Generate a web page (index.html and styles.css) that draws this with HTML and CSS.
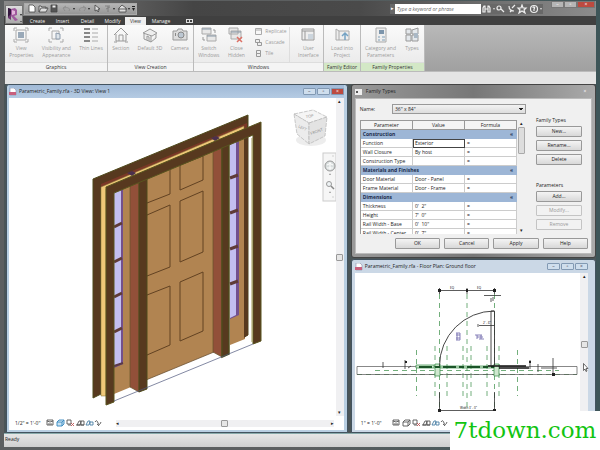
FILE: index.html
```
<!DOCTYPE html>
<html lang="en">
<head>
    <meta charset="UTF-8">
    <meta name="viewport" content="width=device-width, initial-scale=1.0">
    <title>Parametric_Family.rfa</title>
    <link rel="stylesheet" href="styles.css">
</head>
<body>
    <div class="app">
        <header class="titlebar">
            <div class="quick-access">
                <svg width="108" height="10" viewBox="0 0 108 10">
                    <g fill="none" stroke="#444" stroke-width=".8">
                        <path d="M2 1h4l2 2v5H2z" fill="#fff"/>
                        <path d="M12 8V2h2l1 1h4v2M12 8l2-4h7l-2 4z" fill="#ddd"/>
                        <path d="M24 1h6v7h-6z" fill="#555"/>
                        <path d="M25.500 1.500h3v2h-3z" fill="#eee" stroke="none"/>
                        <path d="M42 7c2-3-2-4-5-3M39 2l-3 2 2 3M53 7c-2-3 2-4 5-3M56 2l3 2-2 3" stroke="#888"/>
                        <path d="M68 1v6l2-1 1 2 1-1-1-2h2z" fill="#ddd"/>
                        <path d="M78 2h5M81 2v6M79 5l4-2" stroke="#777"/>
                        <path d="M92 4l3-3 4 3v4h-7zM91 5h9" fill="#ddd"/>
                    </g>
                    <path d="M46 4h2l-1 2zM61 4h2l-1 2zM86 4h2l-1 2zM101 4h2l-1 2zM105 2h3v1h-3zM105 4h3l-1.500 3z" fill="#222"/>
                </svg>
            </div>
            <div class="search">
                <button class="search-arrow" aria-label="Expand search">▸</button>
                <input type="text" aria-label="Search help" placeholder="Type a keyword or phrase">
                <svg width="62" height="10" viewBox="0 0 62 10">
                    <g fill="none" stroke="#eee" stroke-width="1.200">
                        <path d="M2 8V4l1-2h1v6zM7 8V2h1l1 2v4zM4 5h3"/>
                        <circle cx="18" cy="4" r="2"/><path d="M20 5l3 3"/>
                        <path d="M28 2c0 4 2 5 5 5M31 4l3-3M29 8l2-2"/>
                        <path d="M41 1l1 3h3l-2 2 1 3-3-2-3 2 1-3-2-2h3z"/>
                        <circle cx="53" cy="5" r="3.500"/><path d="M52 4c0-2 3-1 1 1v2"/>
                    </g>
                    <path d="M12 4h2l-1 2zM59 4h2l-1 2z" fill="#ddd"/>
                </svg>
            </div>
            <div class="window-buttons">
                <button aria-label="Minimize">–</button>
                <button aria-label="Maximize">▫</button>
                <button class="close" aria-label="Close">×</button>
            </div>
        </header>
        <button class="app-button" aria-label="Application menu">
            <svg width="17" height="17" viewBox="0 0 17 17">
                <path d="M2 2l3 1v11l-3-2z" fill="#6d3a72"/>
                <path d="M5 3l4-1 2 2v5l-3 1 4 4-3 1-4-5z" fill="#a05a9e"/>
                <path d="M6 4l3 1v3l-3 1z" fill="#e3b5dc"/>
                <path d="M2 2l3 1v5l-3 3z" fill="#32163d"/>
                <path d="M14 8h2l-1 2zM14 15h2l-1 1z" fill="#222"/>
            </svg>
        </button>

        <nav class="tabs">
            <a href="#">Create</a>
            <a href="#">Insert</a>
            <a href="#">Detail</a>
            <a href="#">Modify</a>
            <a href="#" class="active">View</a>
            <a href="#">Manage</a>
            <svg class="tab-toggle" width="7" height="4" viewBox="0 0 7 4"><rect x=".5" y=".5" width="6" height="3" fill="none" stroke="#ddd"/><path d="M3 1h1v2H3z" fill="#ddd"/></svg>
        </nav>

        <section class="ribbon">
            <div class="panel graphics">
                <div class="tools">
                    <button class="tool" disabled>
                        <svg width="16" height="16" viewBox="0 0 16 16"><path d="M4 1H1v3M12 1h3v3M4 15H1v-3M12 15h3v-3M3 3h10v10H3z" fill="none" stroke="#aaa"/><path d="M5 5h6v6H5z" fill="#9aa9b8"/></svg>
                        View<br>Properties
                    </button>
                    <button class="tool" disabled>
                        <svg width="16" height="16" viewBox="0 0 16 16"><path d="M4 1H1v3M12 1h3v3M4 15H1v-3M12 15h3v-3M4 4h7v8H4z" fill="none" stroke="#aaa"/><path d="M8 6l4 1v5H8z" fill="#dfe5ea" stroke="#8d9bab"/></svg>
                        Visibility and<br>Appearance
                    </button>
                    <button class="tool" disabled>
                        <svg width="16" height="16" viewBox="0 0 16 16"><path d="M1 2h6M1 6h6M1 10h6M1 14h6" stroke="#888" stroke-width="2"/><path d="M9 2h6M9 6h6M9 10h6M9 14h6" stroke="#aaa"/></svg>
                        Thin Lines
                    </button>
                </div>
                <h2>Graphics</h2>
            </div>
            <div class="panel creation">
                <div class="tools">
                    <button class="tool" disabled>
                        <svg width="16" height="16" viewBox="0 0 16 16"><path d="M1 8l7-7 7 7M3 7v7h10V7M6 14V8h4v6M1 15h3M12 15h3" fill="none" stroke="#999"/></svg>
                        Section
                    </button>
                    <button class="tool" disabled>
                        <svg width="16" height="16" viewBox="0 0 16 16"><path d="M1 6l7-4 7 4-5 3zM2 7v5l7 3V9M9 15l5-4V7M5 13V9l2 1v4" fill="#eee" stroke="#999"/></svg>
                        Default 3D
                    </button>
                    <button class="tool" disabled>
                        <svg width="16" height="16" viewBox="0 0 16 16"><path d="M1 4h4l1-2h4l1 2h4v9H1z" fill="#ddd" stroke="#999"/><circle cx="9" cy="8" r="3" fill="#bcc7d2" stroke="#888"/><path d="M3 6h1v3H3z" fill="#888"/></svg>
                        Camera
                    </button>
                </div>
                <h2>View Creation</h2>
            </div>
            <div class="panel windows">
                <div class="tools">
                    <button class="tool" disabled>
                        <svg width="16" height="16" viewBox="0 0 16 16"><path d="M1 1h9v6H1zM6 8h9v6H6z" fill="#e8e8e8" stroke="#aaa"/><path d="M1 2h9M6 9h9" stroke="#8797a6"/><path d="M12 3h2v3M4 13H2v-3" fill="none" stroke="#999"/></svg>
                        Switch<br>Windows
                    </button>
                    <button class="tool" disabled>
                        <svg width="16" height="16" viewBox="0 0 16 16"><path d="M1 1h9v6H1zM3 4h10v8H3z" fill="#e8e8e8" stroke="#aaa"/><path d="M3 5h10" stroke="#8797a6"/><path d="M9 10l5 5M14 10l-5 5" stroke="#dc7065" stroke-width="1.500"/></svg>
                        Close<br>Hidden
                    </button>
                    <div class="tool-list">
                        <button disabled><svg width="7" height="7" viewBox="0 0 7 7"><path d="M.5.5h6v6h-6zM1 2h5" fill="none" stroke="#aaa"/></svg>Replicate</button>
                        <button disabled><svg width="7" height="7" viewBox="0 0 7 7"><path d="M.5.5h4v3h-4zM2.500 3.500h4v3h-4z" fill="#eee" stroke="#999"/></svg>Cascade</button>
                        <button disabled><svg width="7" height="7" viewBox="0 0 7 7"><path d="M1.500.5h4v3h-4zM1.500 3.500h4v3h-4z" fill="none" stroke="#999"/></svg>Tile</button>
                    </div>
                    <button class="tool" disabled>
                        <svg width="16" height="16" viewBox="0 0 16 16"><path d="M2 2h12v11H2z" fill="#eee" stroke="#999"/><path d="M2 4h12M5 4v9" stroke="#999"/><path d="M8 7h5v5H8z" fill="#ccd5dd"/></svg>
                        User<br>Interface
                    </button>
                </div>
                <h2>Windows</h2>
            </div>
            <div class="panel editor family">
                <div class="tools">
                    <button class="tool" disabled>
                        <svg width="16" height="16" viewBox="0 0 16 16"><path d="M2 2l3 2v9H2zM5 4h10v9H5" fill="#eee" stroke="#aaa"/><path d="M11 13V7M8 9l3-3 3 3" fill="none" stroke="#75a3c4" stroke-width="1.500"/></svg>
                        Load into<br>Project
                    </button>
                </div>
                <h2>Family Editor</h2>
            </div>
            <div class="panel props family">
                <div class="tools">
                    <button class="tool" disabled>
                        <svg width="16" height="16" viewBox="0 0 16 16"><path d="M3 1h10v14H3z" fill="#eee" stroke="#aaa"/><path d="M6 3h5v4H6z" fill="#7d95ab"/><path d="M5 10h2M9 10h3M5 13h2M9 13h3" stroke="#80a0b8"/></svg>
                        Category and<br>Parameters
                    </button>
                    <button class="tool" disabled>
                        <svg width="16" height="16" viewBox="0 0 16 16"><path d="M2 2h5v5H2zM2 8h5v6H2zM8 3l6-2v6H8zM8 8h6v6H8z" fill="#e4e8ec" stroke="#999"/><path d="M10 6h4v5h-4z" fill="#aab8c5"/></svg>
                        Types
                    </button>
                </div>
                <h2>Family Properties</h2>
            </div>
        </section>
        <div class="options-bar"></div>

        <main class="workspace">
            <section class="doc active-doc">
                <div class="doc-title">
                    <svg width="8" height="8" viewBox="0 0 8 8"><path d="M1 0h4l2 2v5H1z" fill="#fff" stroke="#8a8fa8" stroke-width=".6"/><path d="M0 4h7v3H0z" fill="#c8607d"/></svg>
                    <h1>Parametric_Family.rfa - 3D View: View 1</h1>
                    <div class="doc-buttons">
                        <button aria-label="Minimize view">–</button>
                        <button aria-label="Restore view">▫</button>
                        <button class="close" aria-label="Close view">×</button>
                    </div>
                </div>
                <div class="doc-body">
                    <div class="canvas">
                        <svg width="329" height="320" viewBox="9 98 329 320">
                            <!-- back frame -->
                            <path d="M93 179L248 115V335L244 337V127L101 190V394L93 398z" fill="#57391f" stroke="#4f4a1c"/>
                            <path d="M101 184L247 123V133L101 196z" fill="#7b3827"/>
                            <path d="M101 187L244 126V129L106 189V396H101z" fill="#efc878" stroke="#83703a" stroke-width=".5"/>
                            <path d="M127 173l5-2 4 2-4 3zM211 138l5-2 4 2-5 3z" fill="#4b304d"/>
                            <!-- left sidelight -->
                            <path d="M114 190L131 183V387L114 394z" fill="#b18451"/>
                            <path d="M114 192L123 188V364L114 368z" fill="#72508e"/>
                            <path d="M114 192L121 189V363L114 366z" fill="#c3bff0"/>
                            <path d="M114 227l8-4M114 262l8-4M114 297l8-4M114 332l8-4" stroke="#5f3b37" stroke-width="3"/>
                            <path d="M114 366l9-3" stroke="#5b3a49" stroke-width="2"/>
                            <!-- door leaf -->
                            <path d="M146 177L214 149V352L146 380z" fill="#b18451" stroke="#5f4526" stroke-width=".7"/>
                            <g fill="none" stroke="#624222">
                                <path d="M147 178L170 169V194L147 203"/>
                                <path d="M180 165L203 156V180L180 190z"/>
                                <path d="M147 215L170 205V267L147 276"/>
                                <path d="M180 201L203 191V252L180 262z"/>
                                <path d="M147 295L170 286V345L147 355"/>
                                <path d="M180 282L203 272V331L180 341z"/>
                            </g>
                            <!-- mullion posts -->
                            <path d="M130 184L139 180V392L130 387z" fill="#925039" stroke="#64552a" stroke-width=".7"/>
                            <path d="M139 180L147 177V389L139 392z" fill="#57391f" stroke="#4f4a1c"/>
                            <path d="M213 149L222 145V357L213 352z" fill="#925039" stroke="#64552a" stroke-width=".7"/>
                            <path d="M222 146L229 143V354L222 357z" fill="#57391f" stroke="#4f4a1c" stroke-width="1.500"/>
                            <!-- right sidelight -->
                            <path d="M230 142L245 136V339L230 345z" fill="#b18451"/>
                            <path d="M230 142L239 138V315L230 319z" fill="#72508e"/>
                            <path d="M230 142L236 139V315L230 318z" fill="#c3bff0"/>
                            <path d="M230 178l8-3M230 213l8-3M230 249l8-3M230 284l8-3" stroke="#5f3b37" stroke-width="3"/>
                            <path d="M244 137V338L248 335V134z" fill="#57391f"/>
                            <!-- front frame -->
                            <path d="M106 187L261 122V341L253 344V135L114 193V402L106 405z" fill="#57391f" stroke="#59551f"/>
                            <path d="M252 138V342" stroke="#a39b57"/>
                            <path d="M114 401L253 344" stroke="#4d567b" stroke-width=".7"/>
                            <!-- view cube -->
                            <ellipse cx="311" cy="140" rx="15" ry="6" fill="#ededed"/>
                            <g stroke="#b5b5b5" stroke-width=".7" stroke-dasharray="4 1">
                                <path d="M294 114L313 110L327 117L309 123z" fill="#f5f5f5"/>
                                <path d="M294 114L309 123V144L297 134z" fill="#ececec"/>
                                <path d="M309 123L327 117L325 136L309 144z" fill="#e3e3e3"/>
                            </g>
                            <text class="cube-text" transform="translate(306 118) rotate(-7)">TOP</text>
                            <text class="cube-text" transform="translate(298 127) rotate(28)">LEFT</text>
                            <text class="cube-text" transform="translate(311 135) rotate(-20)">FRONT</text>
                            <!-- navigation bar -->
                            <rect x="323" y="153" width="13" height="48" fill="#f6f6f6" stroke="#ccc"/>
                            <circle cx="330" cy="166" r="5" fill="#d8dddd" stroke="#999"/>
                            <path d="M327 165q3-3 6 0M327 168h6M330 162v8" fill="none" stroke="#fff"/>
                            <circle cx="329" cy="184" r="2.500" fill="#eef3f5" stroke="#999"/>
                            <path d="M331 186l3 3" stroke="#888" stroke-width="1.500"/>
                            <path d="M329 174h2l-1 1zM329 192h2l-1 1zM332 156h2M332 197h2" fill="#777" stroke="#aaa" stroke-width=".5"/>
                        </svg>
                    </div>
                    <div class="scroll-v"><span>▴</span><i class="thumb"></i><span>▾</span></div>
                </div>
                <div class="view-bar">
                    <span class="scale">1/2" = 1'-0"</span>
                    <svg width="56" height="8" viewBox="0 0 56 8">
                        <g fill="none" stroke="#555" stroke-width=".9">
                            <path d="M1 1h6v5H1zM1 2l3 1 3-1M2 5h4"/>
                            <path d="M11 3l2-2h5v4l-2 2h-5zM11 3h5l2-2M16 3v4" stroke="#3486bd" fill="#c9e4f5"/>
                            <path d="M21 1h4v4h-4zM22 6h3"/><path d="M25 4l3 3M28 4l-3 3" stroke="#b55"/>
                            <path d="M31 6l2-4h2l-1 4zM35 2h3v4h-3zM30 6h8"/>
                            <path d="M40 6l2-4h2l-1 4zM44 3h3v3h-3z" stroke="#497fa5"/>
                            <path d="M49 3q2-3 3 1t3-1M51 5l2 2"/>
                        </g>
                    </svg>
                    <div class="scroll-h"><span>◂</span><i class="thumb"></i><span>▸</span></div>
                </div>
            </section>

            <div class="side">
                <section class="dialog">
                    <div class="dialog-title">
                        <svg width="8" height="6" viewBox="0 0 8 6"><path d="M0 0h7v6H0z" fill="#eee"/><path d="M1 2h2v2H1z" fill="#555"/></svg>
                        <h1>Family Types</h1>
                        <button aria-label="Close dialog">×</button>
                    </div>
                    <div class="dialog-body">
                        <div class="dialog-main">
                            <div class="name-row">
                                <label for="typeName">Name:</label>
                                <select id="typeName"><option>36" x 84"</option></select>
                            </div>
                            <div class="grid-box">
                                <div class="grid-clip">
                                    <table>
                                        <thead>
                                            <tr><th>Parameter</th><th>Value</th><th>Formula</th></tr>
                                        </thead>
                                        <tbody>
                                            <tr class="group"><td colspan="2">Construction</td><td class="fold">«</td></tr>
                                            <tr><td>Function</td><td class="selected">Exterior</td><td>=</td></tr>
                                            <tr><td>Wall Closure</td><td>By host</td><td>=</td></tr>
                                            <tr><td>Construction Type</td><td></td><td>=</td></tr>
                                            <tr class="group"><td colspan="2">Materials and Finishes</td><td class="fold">«</td></tr>
                                            <tr><td>Door Material</td><td>Door - Panel</td><td>=</td></tr>
                                            <tr><td>Frame Material</td><td>Door - Frame</td><td>=</td></tr>
                                            <tr class="group"><td colspan="2">Dimensions</td><td class="fold">«</td></tr>
                                            <tr><td>Thickness</td><td>0'&nbsp; 2"</td><td>=</td></tr>
                                            <tr><td>Height</td><td>7'&nbsp; 0"</td><td>=</td></tr>
                                            <tr><td>Rail Width - Base</td><td>0'&nbsp; 10"</td><td>=</td></tr>
                                            <tr><td>Rail Width - Center</td><td>0'&nbsp; 7"</td><td>=</td></tr>
                                        </tbody>
                                    </table>
                                </div>
                                <div class="grid-scroll"><span>▴</span><i class="grid-thumb"></i><span class="down">▾</span></div>
                            </div>
                        </div>
                        <div class="dialog-side">
                            <h2>Family Types</h2>
                            <button>New...</button>
                            <button>Rename...</button>
                            <button>Delete</button>
                            <h2 class="params">Parameters</h2>
                            <button>Add...</button>
                            <button disabled>Modify...</button>
                            <button disabled>Remove</button>
                        </div>
                        <div class="dialog-foot">
                            <button>OK</button>
                            <button>Cancel</button>
                            <button>Apply</button>
                            <button>Help</button>
                        </div>
                    </div>
                </section>

                <section class="doc plan-doc">
                    <div class="doc-title">
                        <svg width="8" height="8" viewBox="0 0 8 8"><path d="M1 0h4l2 2v5H1z" fill="#fff" stroke="#8a8fa8" stroke-width=".6"/><path d="M0 4h7v3H0z" fill="#c8607d"/></svg>
                        <h1>Parametric_Family.rfa - Floor Plan: Ground floor</h1>
                        <div class="doc-buttons">
                            <button aria-label="Minimize view">–</button>
                            <button aria-label="Restore view">▫</button>
                            <button aria-label="Close view">×</button>
                        </div>
                    </div>
                    <div class="doc-body">
                        <div class="canvas">
                            <svg width="227" height="144" viewBox="356 273 227 144">
                                <!-- reference planes -->
                                <g fill="none" stroke="#4f9a5a" stroke-width=".8" stroke-dasharray="5 4">
                                    <path d="M440.500 294V408M468 294V408M495.500 294V408"/>
                                    <path d="M417.500 350V396M436 346V396M448 346V396M464 346V396M472 346V396M488 346V396M500 346V396M518.500 350V396"/>
                                    <path d="M376 370.500H560M358 374.500H578"/>
                                </g>
                                <path d="M358 366.500H578V374.500H358z" fill="none" stroke="#555" stroke-width=".7"/>
                                <path d="M417 365h18v3h-18zM436 364h5v12h-5zM495 364h5v12h-5zM441 366h54v2h-54z" fill="#cfe8cf" stroke="#358b45" stroke-width=".7"/>
                                <path d="M420 367H495" stroke="#1b5428" stroke-width="2" stroke-dasharray="13 3 5 3"/>
                                <path d="M489 366H527M500 368H530" stroke="#111" stroke-width="1.500"/>
                                <!-- door swing -->
                                <path d="M440.500 366A55 55 0 0 1 495.500 311M492 311V366M495.500 311V366M492 311h3" fill="none" stroke="#333" stroke-width=".9"/>
                                <!-- dimensions -->
                                <g fill="none" stroke="#333" stroke-width=".8">
                                    <path d="M440 290.500H496M440.500 288v6M468 288v6M495.500 288v6M480 325.500H495M479 324v3"/>
                                    <path d="M440.500 392V410.500H495.500V392M485 295.500h17M492 298v4M494 297v4"/>
                                    <path d="M384 362v6M406 360v9M409 368l3-2M531 360v9M539 364v8M554 358v18M542 368h16"/>
                                </g>
                                <path d="M439 289h3v3h-3zM467 289h2v3h-2zM494 289h3v3h-3zM439 409h3v3h-3zM494 409h3v3h-3zM553 373h3v3h-3zM406 361h2v2h-2zM530 361h2v2h-2z" fill="#222"/>
                                <g class="dim-text">
                                    <text x="451" y="289">EQ</text>
                                    <text x="478" y="289">EQ</text>
                                    <text x="484" y="324">2' - 6"</text>
                                    <text x="461" y="409">Width 3' - 0"</text>
                                </g>
                                <!-- flip controls -->
                                <path d="M457 333h4M457 335h4M458 333v7M461 333v7M457 338h4M457 340h4M476 335h7M478 337h6M478 335v4M482 335v4M480 339h5" fill="none" stroke="#6a62a8" stroke-width=".8"/>
                            </svg>
                        </div>
                        <div class="scroll-v"><span>▴</span><i class="thumb"></i><span>▾</span></div>
                        <svg class="cursor" width="6" height="9" viewBox="0 0 6 9"><path d="M.5.5V7.500L2 6l1 2.500 1-.5-1-2.500h2z" fill="#fff" stroke="#333" stroke-width=".7"/></svg>
                    </div>
                    <div class="view-bar">
                        <span class="scale">1" = 1'-0"</span>
                        <svg width="56" height="8" viewBox="0 0 56 8">
                            <g fill="none" stroke="#555" stroke-width=".9">
                                <path d="M1 1h6v5H1zM1 2l3 1 3-1M2 5h4"/>
                                <path d="M11 3l2-2h5v4l-2 2h-5zM11 3h5l2-2M16 3v4"/>
                                <path d="M21 1h4v4h-4zM22 6h3"/><path d="M25 4l3 3M28 4l-3 3" stroke="#b55"/>
                                <path d="M31 6l2-4h2l-1 4zM35 2h3v4h-3zM30 6h8"/>
                                <path d="M40 6l2-4h2l-1 4zM44 3h3v3h-3z" stroke="#497fa5"/>
                                <path d="M49 3q2-3 3 1t3-1M51 5l2 2"/>
                            </g>
                        </svg>
                    </div>
                </section>
            </div>
        </main>
        <footer class="status">Ready</footer>
    </div>
    <div class="watermark">7tdown.com</div>
</body>
</html>
```
FILE: styles.css
```
* {
    box-sizing: border-box;
}
body {
    margin: 0;
    height: 100vh;
    overflow: hidden;
    background-color: #34484c;
    font-family: "Open Sans", "Noto Sans", sans-serif;
    font-size: 5px;
    line-height: 7px;
    color: #222;
}
h1, h2 {
    margin: 0;
    font-size: 5px;
    font-weight: normal;
}
button, input, select {
    font: inherit;
    color: inherit;
    margin: 0;
    padding: 0;
    border: none;
    background: none;
}
svg {
    display: block;
    flex: none;
}
.app {
    position: relative;
    display: flex;
    flex-direction: column;
    height: 100vh;
    padding: 1px 4px 3px;
    background: linear-gradient(90deg, #5c5f60 50%, #3d5558);
}

/* title bar */
.titlebar {
    display: flex;
    align-items: center;
    height: 15px;
    padding-left: 20px;
    background: linear-gradient(90deg, #898989, #454545 32%, #4a4a4a 60%, #8c8c8c);
}
.quick-access {
    padding: 0 1px 0 2px;
    border: 1px solid #aaa;
    background: linear-gradient(#b5b5b5, #969696);
}
.search {
    display: flex;
    align-items: center;
    height: 10px;
    margin-left: auto;
    background-color: #686868;
}
.search-arrow {
    width: 5px;
    color: #fff;
}
.search input {
    width: 86px;
    height: 10px;
    padding-left: 2px;
    background-color: #fff;
    font-style: italic;
}
.search input::placeholder {
    color: #666;
}
.window-buttons {
    display: flex;
    align-self: flex-start;
    margin: 0 1px 0 8px;
}
.window-buttons button {
    width: 13px;
    height: 7px;
    border: 1px solid #777;
    background-color: #b5b5b5;
    line-height: 5px;
    color: #fff;
}
.window-buttons .close {
    width: 18px;
}
.window-buttons .close, .doc-buttons .close {
    background-color: #bd4a3f;
    color: #fff;
}
.app-button {
    position: absolute;
    left: 5px;
    top: 5px;
    width: 18px;
    height: 19px;
    border: 1px solid #777;
    background: linear-gradient(#dedede, #aaa);
}

/* ribbon */
.tabs {
    display: flex;
    align-items: center;
    height: 9px;
    padding-left: 21px;
    background-color: #404040;
}
.tabs a {
    width: 25px;
    color: #f2f2f2;
    text-align: center;
    text-decoration: none;
    line-height: 8px;
}
.tabs a.active {
    width: 21px;
    background-color: #eee;
    color: #333;
}
.tabs a:nth-child(6) {
    width: 30px;
}
.tab-toggle {
    margin-left: 10px;
}
.ribbon {
    display: flex;
    height: 46px;
    margin-left: 1px;
    background: linear-gradient(#b9b9b9, #a0a0a0);
}
.panel {
    display: flex;
    flex-direction: column;
    border-right: 1px solid #bbb;
    background: linear-gradient(#fafafa, #e8e8e8);
}
.graphics { width: 103px; }
.creation { width: 86px; }
.windows { width: 130px; }
.editor { width: 37px; }
.props { width: 64px; }
.tools {
    display: flex;
    flex: 1;
    justify-content: space-around;
    padding-top: 2px;
}
.panel h2 {
    border-top: 1px solid #ddd;
    background-color: #f4f4f4;
    line-height: 8px;
    text-align: center;
    color: #333;
}
.family h2 {
    background-color: #d3e8c6;
}
.tool {
    display: flex;
    flex-direction: column;
    align-items: center;
    justify-content: flex-start;
    white-space: nowrap;
    color: #9c9c9c;
}
.tool svg {
    margin-bottom: 2px;
}
.tool-list {
    display: flex;
    flex-direction: column;
    gap: 4px;
    padding: 1px 2px 0;
    border-right: 1px solid #ddd;
}
.tool-list button {
    display: flex;
    align-items: center;
    gap: 3px;
    color: #9c9c9c;
}
.options-bar {
    height: 13px;
    margin-left: 1px;
    border-top: 1px solid #bbb;
    background-color: #e4e4e4;
}

/* document windows */
.workspace {
    display: grid;
    grid-template-columns: 343fr 246fr;
    gap: 3px;
    flex: 1;
    min-height: 0;
    padding-left: 2px;
    background-color: #4b5557;
}
.side {
    display: flex;
    flex-direction: column;
    gap: 1px;
    min-width: 0;
    min-height: 0;
}
.doc {
    display: flex;
    flex-direction: column;
    min-width: 0;
    min-height: 0;
    padding: 0 3px 2px;
    border: 1px solid #43535f;
    border-radius: 3px 3px 0 0;
    background-color: #b9cfe2;
}
.active-doc {
    padding-left: 2px;
}
.doc-title {
    display: flex;
    align-items: center;
    gap: 2px;
    height: 13px;
}
.active-doc .doc-title {
    background: linear-gradient(#a0b9d6, #b5cbe3);
}
.doc-buttons {
    display: flex;
    gap: 1px;
    margin-left: auto;
}
.doc-buttons button {
    width: 13px;
    height: 7px;
    border: 1px solid #8299b3;
    border-radius: 1px;
    background-color: #cfdeed;
    line-height: 5px;
    color: #445;
}
.doc-body {
    position: relative;
    display: flex;
    flex: 1;
    min-height: 0;
    background-color: #fff;
}
.canvas {
    flex: 1;
    min-width: 0;
    overflow: hidden;
}
.scroll-v {
    display: flex;
    flex-direction: column;
    align-items: center;
    justify-content: space-between;
    width: 8px;
    background-color: #f0f0f2;
}
.thumb {
    width: 7px;
    height: 7px;
    border: 1px solid #999;
    border-radius: 1px;
    background-color: #e6e6e6;
}
.view-bar {
    display: flex;
    align-items: center;
    height: 14px;
    padding-left: 6px;
    background-color: #fff;
}
.scale {
    width: 31px;
}
.scroll-h {
    display: flex;
    flex: 1;
    align-items: center;
    justify-content: space-between;
    height: 7px;
    margin: 0 10px 0 14px;
    background-color: #f0f0f2;
}
.cube-text {
    font-size: 4px;
    fill: #888;
}
.dim-text {
    font-size: 3px;
}
.plan-doc {
    flex: 1;
    padding-right: 7px;
    background-color: #cbd8e6;
}
.cursor {
    position: absolute;
    right: -1px;
    top: 90px;
}

/* family types dialog */
.dialog {
    padding: 0 3px 3px;
    border: 1px solid #444;
    border-radius: 3px;
    background: linear-gradient(90deg, #999, #777 50%, #aaa);
}
.dialog-title {
    display: flex;
    align-items: center;
    gap: 3px;
    height: 13px;
}
.dialog-title button {
    width: 14px;
    margin-left: auto;
    color: #fff;
}
.dialog-body {
    display: grid;
    grid-template-columns: 167fr 48px;
    column-gap: 10px;
    padding: 5px 7px 4px 4px;
    border: 1px solid #bbb;
    background-color: #f0f0f0;
}
.name-row {
    display: flex;
    align-items: center;
    justify-content: space-between;
    margin-bottom: 6px;
}
.name-row select {
    appearance: none;
    width: 134px;
    height: 10px;
    padding-left: 2px;
    border: 1px solid #999;
    background: conic-gradient(from -45deg at 50% 100%, #222 90deg, transparent 0) right 2px center / 4px 2px no-repeat, linear-gradient(#f2f2f2, #ddd);
}
.grid-box {
    display: flex;
    height: 114px;
}
.grid-clip {
    flex: 1;
    overflow: hidden;
    border-left: 1px solid #999;
    border-top: 1px solid #999;
    background-color: #fff;
}
table {
    width: 100%;
    border-collapse: separate;
    border-spacing: 0;
    table-layout: fixed;
}
th {
    height: 9px;
    padding: 0;
    border-right: 1px solid #999;
    border-bottom: 1px solid #999;
    background-color: #f4f4f4;
    font-weight: normal;
}
td {
    height: 9px;
    padding: 0 0 0 2px;
    border-right: 1px solid #ccc;
    border-bottom: 1px solid #ccc;
    white-space: nowrap;
}
td.selected {
    padding-left: 1px;
    border: 1px solid #444;
}
.group td {
    border-color: #9db6d6;
    background-color: #9db6d6;
    font-weight: bold;
    color: #1b2c4c;
}
.group .fold {
    padding-right: 3px;
    text-align: right;
}
.grid-scroll {
    display: flex;
    flex-direction: column;
    align-items: center;
    width: 9px;
}
.grid-thumb {
    width: 7px;
    height: 27px;
    border: 1px solid #aaa;
    border-radius: 1px;
    background-color: #ddd;
}
.grid-scroll .down {
    margin-top: auto;
}
.dialog-side {
    display: flex;
    flex-direction: column;
    gap: 3px;
    padding-top: 13px;
}
.dialog-side h2 {
    margin-bottom: -1px;
}
.dialog-side .params {
    margin-top: 14px;
}
.dialog-side button, .dialog-foot button {
    height: 11px;
    border: 1px solid #999;
    border-radius: 1px;
    background: linear-gradient(#f4f4f4, #d8d8d8);
}
.dialog-side button {
    margin-right: 2px;
}
.dialog-side button:disabled {
    border-color: #c4c4c4;
    background: #f2f2f2;
    color: #999;
}
.dialog-foot {
    grid-column: 1 / -1;
    display: grid;
    grid-template-columns: repeat(4, 1fr);
    gap: 4px;
    padding: 4px 0 0 35px;
    margin-right: -4px;
}

.status {
    height: 14px;
    padding: 2px 1px;
    border-top: 1px solid #8aa;
    background: linear-gradient(#e6e6e6, #cfcfcf);
}
.watermark {
    position: absolute;
    right: 0;
    bottom: 0;
    width: 150px;
    height: 39px;
    background-color: #fff;
    font-family: "DejaVu Serif", serif;
    font-size: 23px;
    line-height: 39px;
    text-align: center;
    color: #12c412;
}
```
